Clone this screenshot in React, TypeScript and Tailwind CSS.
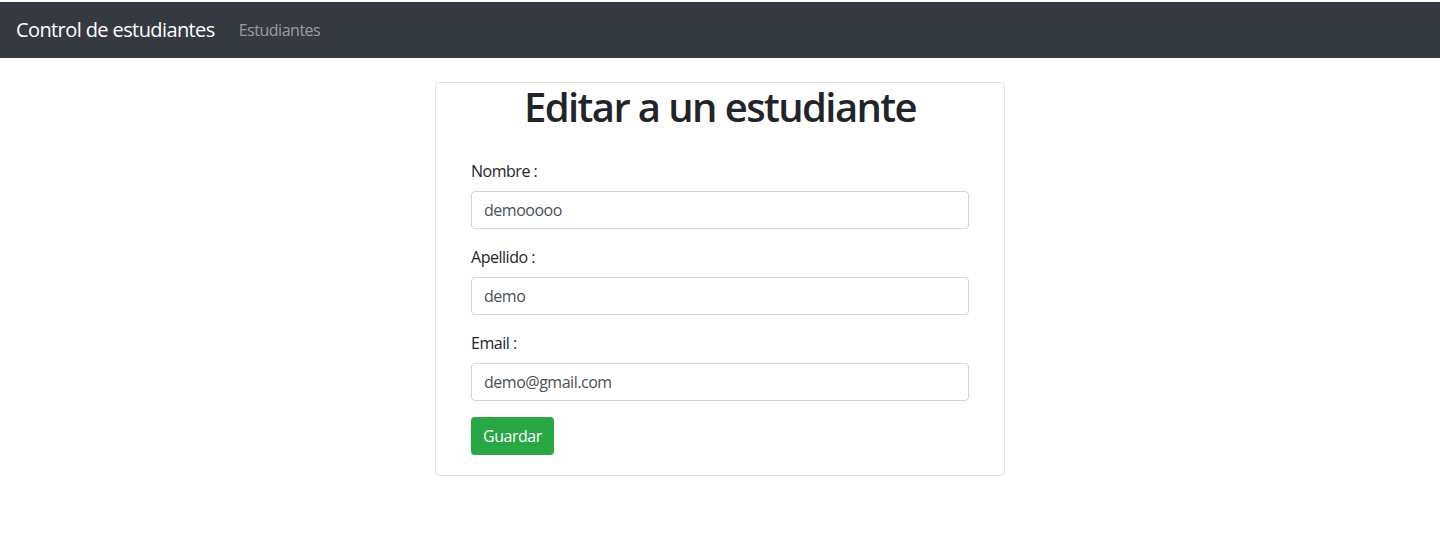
import { useState } from 'react'

function Field({ label, value }: { label: string; value: string }) {
  const [v, setV] = useState(value)
  return (
    <div className="mb-4">
      <label className="block mb-2 text-base leading-6 text-[#212529]">{label}</label>
      <input
        value={v}
        onChange={e => setV(e.target.value)}
        className="block w-full h-[38px] px-3 py-1.5 text-base text-[#495057] bg-white border border-[#ced4da] rounded outline-none"
      />
    </div>
  )
}

export default function App() {
  return (
    <div className="min-h-screen bg-white pt-[2px] text-[#212529] font-['Open_Sans',sans-serif]">
      {/* Navbar */}
      <nav className="flex items-center h-14 px-4 bg-[#343a40]">
        <a href="#" className="mr-4 text-xl leading-[30px] text-white tracking-[-0.03em]">Control de estudiantes</a>
        <a href="#" className="px-2 text-base leading-6 text-white/50 tracking-[-0.03em]">Estudiantes</a>
      </nav>

      {/* Card */}
      <div className="w-[570px] mx-auto mt-6 border border-[#dfdfdf] rounded">
        <h1 className="text-center text-[40px] leading-[48px] font-semibold tracking-[-0.04em]">Editar a un estudiante</h1>
        <form className="px-[35px] pt-7 pb-5 tracking-[-0.03em]">
          <Field label="Nombre :" value="demooooo" />
          <Field label="Apellido :" value="demo" />
          <Field label="Email :" value="demo@gmail.com" />
          <button
            type="button"
            className="h-[38px] px-3 text-base text-white bg-[#28a745] rounded"
          >
            Guardar
          </button>
        </form>
      </div>
    </div>
  )
}
